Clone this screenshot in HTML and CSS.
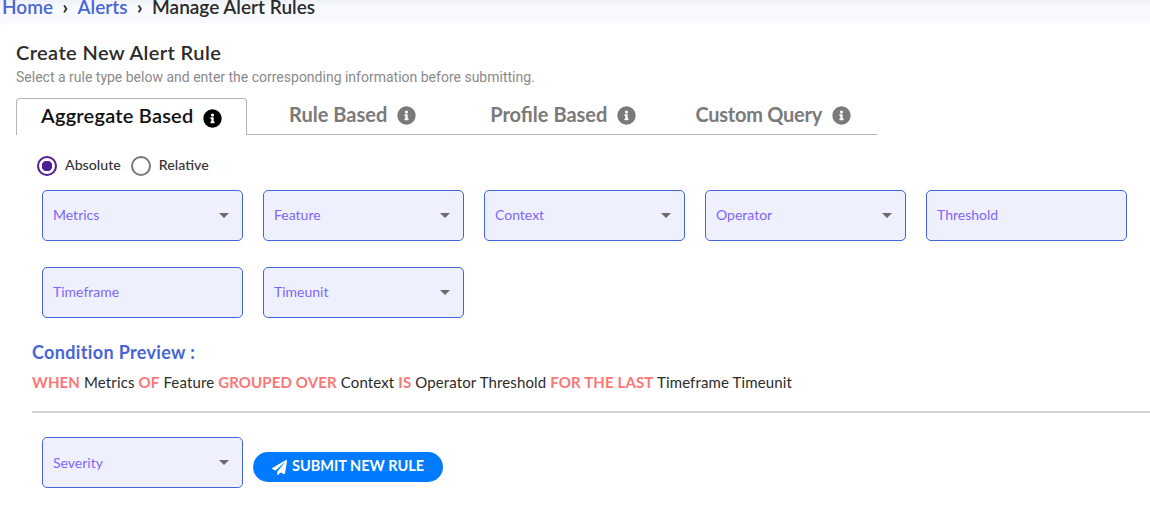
FILE: index.html
```html
<!DOCTYPE html>
<html lang="en">
<head>
    <meta charset="UTF-8">
    <meta name="viewport" content="width=device-width, initial-scale=1.0">
    <title>Manage Alert Rules</title>
    <link rel="stylesheet" href="styles.css">
</head>
<body>
    <nav class="breadcrumb">
        <a href="#">Home</a>
        <span class="crumb-sep">›</span>
        <a href="#">Alerts</a>
        <span class="crumb-sep">›</span>
        <span class="crumb-current">Manage Alert Rules</span>
    </nav>

    <main class="panel">
        <h1 class="panel-title">Create New Alert Rule</h1>
        <p class="panel-hint">Select a rule type below and enter the corresponding information before submitting.</p>

        <div class="tabs">
            <div class="tab tab-active"><span class="tab-text">Aggregate Based</span>
                <svg class="info-icon" viewBox="0 0 512 512"><path d="M256 8a248 248 0 1 0 0 496 248 248 0 0 0 0-496zm0 110a42 42 0 1 1 0 84 42 42 0 0 1 0-84zm56 254c0 7-5 12-12 12h-88c-7 0-12-5-12-12v-24c0-7 5-12 12-12h12v-64h-12c-7 0-12-5-12-12v-24c0-7 5-12 12-12h64c7 0 12 5 12 12v100h12c7 0 12 5 12 12z"/></svg>
            </div>
            <div class="tab tab-rule"><span class="tab-text">Rule Based</span>
                <svg class="info-icon" viewBox="0 0 512 512"><path d="M256 8a248 248 0 1 0 0 496 248 248 0 0 0 0-496zm0 110a42 42 0 1 1 0 84 42 42 0 0 1 0-84zm56 254c0 7-5 12-12 12h-88c-7 0-12-5-12-12v-24c0-7 5-12 12-12h12v-64h-12c-7 0-12-5-12-12v-24c0-7 5-12 12-12h64c7 0 12 5 12 12v100h12c7 0 12 5 12 12z"/></svg>
            </div>
            <div class="tab tab-profile"><span class="tab-text">Profile Based</span>
                <svg class="info-icon" viewBox="0 0 512 512"><path d="M256 8a248 248 0 1 0 0 496 248 248 0 0 0 0-496zm0 110a42 42 0 1 1 0 84 42 42 0 0 1 0-84zm56 254c0 7-5 12-12 12h-88c-7 0-12-5-12-12v-24c0-7 5-12 12-12h12v-64h-12c-7 0-12-5-12-12v-24c0-7 5-12 12-12h64c7 0 12 5 12 12v100h12c7 0 12 5 12 12z"/></svg>
            </div>
            <div class="tab tab-custom"><span class="tab-text">Custom Query</span>
                <svg class="info-icon" viewBox="0 0 512 512"><path d="M256 8a248 248 0 1 0 0 496 248 248 0 0 0 0-496zm0 110a42 42 0 1 1 0 84 42 42 0 0 1 0-84zm56 254c0 7-5 12-12 12h-88c-7 0-12-5-12-12v-24c0-7 5-12 12-12h12v-64h-12c-7 0-12-5-12-12v-24c0-7 5-12 12-12h64c7 0 12 5 12 12v100h12c7 0 12 5 12 12z"/></svg>
            </div>
        </div>

        <div class="radio-row">
            <span class="radio radio-on"></span>
            <span class="radio-label">Absolute</span>
            <span class="radio"></span>
            <span class="radio-label">Relative</span>
        </div>

        <div class="field-grid">
            <div class="field">Metrics<span class="caret"></span></div>
            <div class="field">Feature<span class="caret"></span></div>
            <div class="field">Context<span class="caret"></span></div>
            <div class="field">Operator<span class="caret"></span></div>
            <div class="field">Threshold</div>
            <div class="field">Timeframe</div>
            <div class="field">Timeunit<span class="caret"></span></div>
        </div>

        <h2 class="preview-title">Condition Preview :</h2>
        <p class="preview-text"><b>WHEN</b> Metrics <b>OF</b> Feature <b>GROUPED OVER</b> Context <b>IS</b> Operator Threshold <b>FOR THE LAST</b> Timeframe Timeunit</p>
        <hr class="divider">

        <div class="submit-row">
            <div class="field field-severity">Severity<span class="caret"></span></div>
            <button class="submit-btn" type="button">
                <svg class="plane-icon" viewBox="0 0 512 512"><path d="M476 3L13 270c-18 10-16 35 2 43l106 44 287-253c6-5 13 3 9 8L176 405v83c0 24 29 34 44 16l64-78 125 52c14 6 31-3 33-18L514 28c3-20-19-35-38-25z"/></svg>
                SUBMIT NEW RULE
            </button>
        </div>
    </main>
</body>
</html>
```

FILE: styles.css
```css
body {
    font-family: 'Lato', 'Open Sans', sans-serif;
    background-color: #f8faff;
    margin: 0;
    padding: 0;
    color: #212529;
    overflow: hidden;
}

.breadcrumb {
    height: 23px;
    box-sizing: border-box;
    padding-left: 2px;
    display: flex;
    align-items: flex-end;
    gap: 9.5px;
    font-size: 19px;
    font-weight: 600;
    line-height: 32px;
    background: linear-gradient(#eef1f7, #f8faff 8px);
    overflow: hidden;
}

.breadcrumb a {
    color: #4865d6;
    text-decoration: none;
}

.crumb-sep {
    color: #222;
    font-weight: 700;
}

.crumb-current {
    color: #2b2b2b;
}

.panel {
    height: 484px;
    box-sizing: border-box;
    padding: 19px 0 0 16px;
    background-color: #fff;
    border-top-left-radius: 6px;
}

.panel-title {
    margin: 0;
    font-size: 20px;
    letter-spacing: 0.4px;
    line-height: 20px;
    font-weight: 600;
    color: #2b2b2b;
}

.panel-hint {
    margin: 6px 0 0;
    font-family: 'Roboto', sans-serif;
    font-size: 14px;
    line-height: 18px;
    color: #8a8a8a;
}

.tabs {
    display: flex;
    width: 861px;
    height: 37px;
    margin-top: 12px;
    border-bottom: 1px solid #b5b5b5;
    box-sizing: border-box;
}

.tab {
    display: flex;
    align-items: center;
    gap: 10px;
    height: 35px;
    font-size: 20px;
    font-weight: 700;
    color: #7a7a7a;
    white-space: nowrap;
}

.tab-text {
    padding-bottom: 3px;
}

.tab-active {
    width: 231px;
    height: 37px;
    box-sizing: border-box;
    padding: 0 0 0 24px;
    color: #111;
    font-weight: 600;
    background-color: #fff;
    border: 1px solid #b5b5b5;
    border-bottom: 0;
    border-radius: 4px 4px 0 0;
}

.tab-active .tab-text {
    letter-spacing: 0.22px;
    padding-bottom: 4px;
}

.tab-rule {
    margin-left: 42px;
}

.tab-profile {
    margin-left: 74px;
}

.tab-custom {
    margin-left: 59px;
}

.tab-custom .tab-text {
    letter-spacing: -0.25px;
}

.info-icon {
    width: 19px;
    height: 19px;
    fill: #7a7a7a;
}

.tab-active .info-icon {
    fill: #000;
    margin-top: 2px;
}

.radio-row {
    display: flex;
    align-items: center;
    height: 20px;
    margin: 21px 0 0 21px;
    font-size: 14.2px;
    font-weight: 500;
    color: #333;
}

.radio {
    width: 20px;
    height: 20px;
    box-sizing: border-box;
    border: 2px solid #777;
    border-radius: 50%;
}

.radio-on {
    border-color: #4c1d95;
    background: radial-gradient(circle, #4c1d95 0 5px, #fff 5.5px);
}

.radio-label {
    margin: 0 10px 0 8px;
    padding-bottom: 3px;
}

.field-grid {
    display: grid;
    grid-template-columns: repeat(5, 201px);
    column-gap: 20px;
    row-gap: 26px;
    margin: 14px 0 0 26px;
}

.field {
    position: relative;
    height: 51px;
    width: 201px;
    box-sizing: border-box;
    padding: 0 0 2px 10px;
    display: flex;
    align-items: center;
    font-size: 14px;
    color: #7f66fa;
    background-color: #eef0fd;
    border: 1px solid #4364db;
    border-radius: 5px;
}

.field-severity {
    padding-bottom: 0;
}

.caret {
    position: absolute;
    right: 13px;
    top: 22px;
    border-left: 5px solid transparent;
    border-right: 5px solid transparent;
    border-top: 5px solid #6b6b6b;
}

.preview-title {
    margin: 24px 0 0 16px;
    font-size: 18px;
    letter-spacing: 0.35px;
    line-height: 20px;
    font-weight: 700;
    color: #4865d6;
}

.preview-text {
    margin: 10px 0 0 16px;
    font-size: 15px;
    letter-spacing: 0.13px;
    line-height: 20px;
    color: #2b2b2b;
}

.preview-text b {
    font-weight: 700;
    color: #fb7676;
}

.divider {
    margin: 19px 0 0 16px;
    height: 2px;
    border: 0;
    background-color: #d3d3d3;
}

.submit-row {
    display: flex;
    margin: 24px 0 0 26px;
}

.submit-btn {
    display: flex;
    align-items: center;
    justify-content: center;
    gap: 5px;
    width: 190px;
    height: 30px;
    margin: 15px 0 0 10px;
    padding: 0 0 3px;
    font-family: inherit;
    font-size: 14.5px;
    font-weight: 700;
    color: #fff;
    background-color: #007bff;
    border: 0;
    border-radius: 15px;
}

.plane-icon {
    width: 15px;
    height: 15px;
    margin-top: 3px;
    fill: #fff;
}
```
